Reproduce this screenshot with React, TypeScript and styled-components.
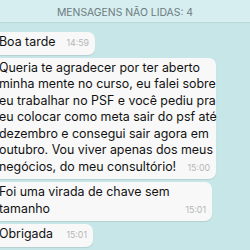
import React from "react";
import styled, { createGlobalStyle } from "styled-components";

const Global = createGlobalStyle`
  html, body { margin: 0; padding: 0; }
  body { background: #c7e6e8; overflow: hidden; }
  #root { width: 250px; height: 250px; }
`;

const Screen = styled.div`
  width: 250px;
  height: 250px;
  background: #c7e6e8;
  overflow: hidden;
  display: flex;
  flex-direction: column;
  font-family: Inter, "Liberation Sans", Arial, sans-serif;
`;

const Banner = styled.div`
  height: 22px;
  flex: none;
  background: #d6eef0;
  box-shadow: 0 1px 1px rgba(0, 0, 0, 0.06);
  display: flex;
  align-items: center;
  justify-content: center;
  padding-top: 3px;
  box-sizing: border-box;
  color: #6d7b7d;
  font-size: 10.4px;
  letter-spacing: 0;
`;

const List = styled.div`
  display: flex;
  flex-direction: column;
  align-items: flex-start;
  gap: 3px;
  padding-top: 10px;
  margin-left: -8px;
`;

const Bubble = styled.div<{ $right: number }>`
  box-sizing: border-box;
  width: ${(p) => p.$right + 8}px;
  padding: 2px 5px 3px 7px;
  background: #f8f8f8;
  border-radius: 7px;
  box-shadow: 0 1px 1px rgba(0, 0, 0, 0.1);
  color: #111111;
  font-size: 12.4px;
  line-height: 16.5px;
`;

const Line = styled.div`
  white-space: nowrap;
`;

const LastLine = styled.div`
  display: flex;
  align-items: baseline;
  justify-content: space-between;
  white-space: nowrap;
`;

const Time = styled.span`
  font-size: 8.8px;
  color: #b3b7b7;
  padding-right: 1px;
`;

type Msg = { lines: string[]; time: string; right: number };

const messages: Msg[] = [
  { lines: ["Boa tarde"], time: "14:59", right: 95 },
  {
    lines: [
      "Queria te agradecer por ter aberto",
      "minha mente no curso, eu falei sobre",
      "eu trabalhar no PSF e você pediu pra",
      "eu colocar como meta sair do psf até",
      "dezembro e consegui sair agora em",
      "outubro. Vou viver apenas dos meus",
      "negócios, do meu consultório!",
    ],
    time: "15:00",
    right: 216,
  },
  { lines: ["Foi uma virada de chave sem", "tamanho"], time: "15:01", right: 212 },
  { lines: ["Obrigada"], time: "15:01", right: 93 },
];

export default function App() {
  return (
    <Screen>
      <Global />
      <Banner>MENSAGENS NÃO LIDAS: 4</Banner>
      <List>
        {messages.map((m, i) => (
          <Bubble key={i} $right={m.right}>
            {m.lines.slice(0, -1).map((l, j) => (
              <Line key={j}>{l}</Line>
            ))}
            <LastLine>
              <span>{m.lines[m.lines.length - 1]}</span>
              <Time>{m.time}</Time>
            </LastLine>
          </Bubble>
        ))}
      </List>
    </Screen>
  );
}
